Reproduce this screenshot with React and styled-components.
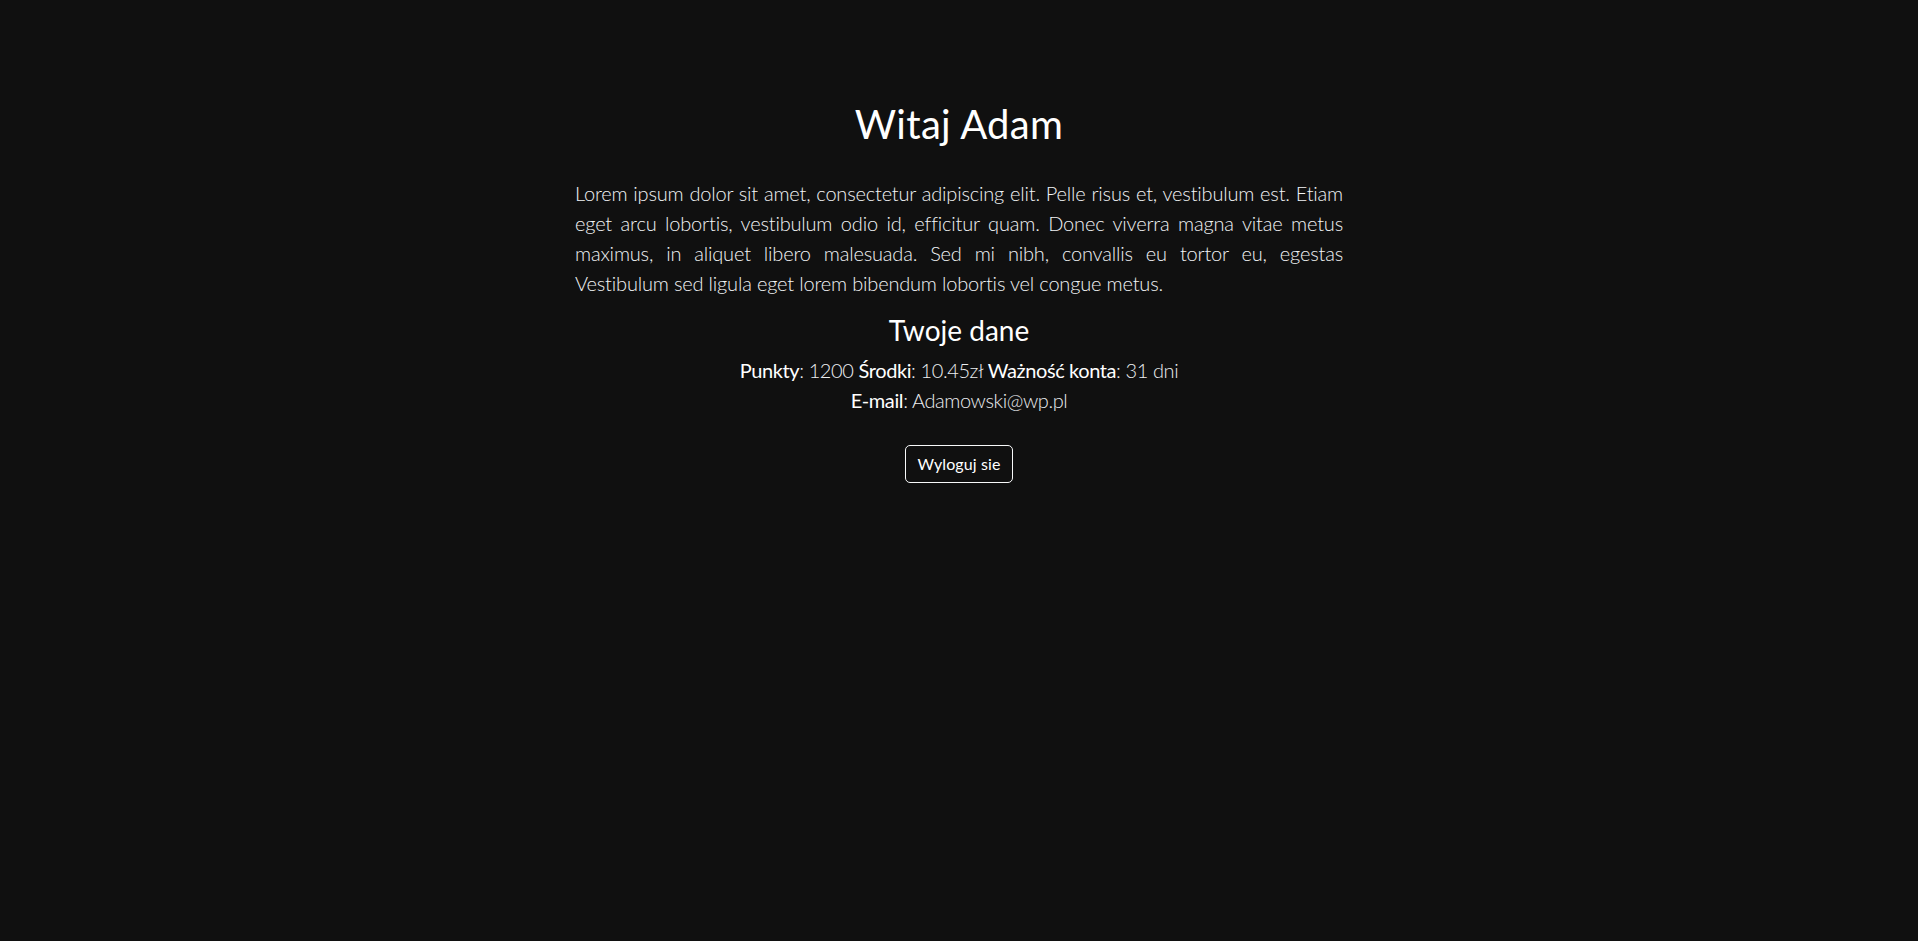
import React from "react";
import styled, { createGlobalStyle } from "styled-components";

const GlobalStyle = createGlobalStyle`
  html, body {
    margin: 0;
    padding: 0;
    background: #101010;
    color: #eef0f2;
    font-family: "Lato", "Noto Sans", sans-serif;
    -webkit-font-smoothing: antialiased;
  }
  #root {
    min-height: 100vh;
  }
`;

const Page = styled.main`
  min-height: 100vh;
  box-sizing: border-box;
  padding-top: 100px;
  display: flex;
  justify-content: center;
`;

const Content = styled.section`
  width: 768px;
  display: flex;
  flex-direction: column;
  align-items: center;
`;

const Title = styled.h1`
  margin: 0 0 30px;
  font-size: 40px;
  line-height: 48px;
  font-weight: 400;
  letter-spacing: 0.3px;
  color: #ffffff;
  text-align: center;
`;

const Lead = styled.p`
  margin: 0 0 15px;
  width: 100%;
  font-size: 20px;
  line-height: 30px;
  font-weight: 300;
  letter-spacing: -0.18px;
  text-align: justify;
  color: #f1f3f5;
`;

const Subtitle = styled.h3`
  margin: 0 0 8px;
  font-size: 28px;
  line-height: 34px;
  font-weight: 400;
  color: #ffffff;
  text-align: center;
`;

const InfoLine = styled.div`
  font-size: 20px;
  line-height: 30px;
  font-weight: 300;
  letter-spacing: -0.4px;
  color: #eceef0;
  text-align: center;
`;

const Label = styled.strong`
  font-weight: 400;
  color: #ffffff;
`;

const LogoutButton = styled.button`
  margin-top: 30px;
  box-sizing: border-box;
  height: 38px;
  padding: 6px 12px;
  font-family: "Lato", "Noto Sans", sans-serif;
  font-size: 16px;
  line-height: 24px;
  font-weight: 400;
  letter-spacing: 0.1px;
  color: #ffffff;
  background: transparent;
  border: 1px solid #f8f9fa;
  border-radius: 5px;
  cursor: pointer;
  &:hover {
    background: #f8f9fa;
    color: #101010;
  }
`;

export default function App() {
  return (
    <>
      <GlobalStyle />
      <Page>
        <Content>
          <Title>Witaj Adam</Title>
          <Lead>
            Lorem ipsum dolor sit amet, consectetur adipiscing elit. Pelle risus et, vestibulum est. Etiam eget
            arcu lobortis, vestibulum odio id, efficitur quam. Donec viverra magna vitae metus maximus, in
            aliquet libero malesuada. Sed mi nibh, convallis eu tortor eu, egestas Vestibulum sed ligula eget
            lorem bibendum lobortis vel congue metus.
          </Lead>
          <Subtitle>Twoje dane</Subtitle>
          <InfoLine>
            <Label>Punkty</Label>: 1200 <Label>Środki</Label>: 10.45zł <Label>Ważność konta</Label>: 31 dni
          </InfoLine>
          <InfoLine>
            <Label>E-mail</Label>: Adamowski@wp.pl
          </InfoLine>
          <LogoutButton type="button">Wyloguj sie</LogoutButton>
        </Content>
      </Page>
    </>
  );
}
